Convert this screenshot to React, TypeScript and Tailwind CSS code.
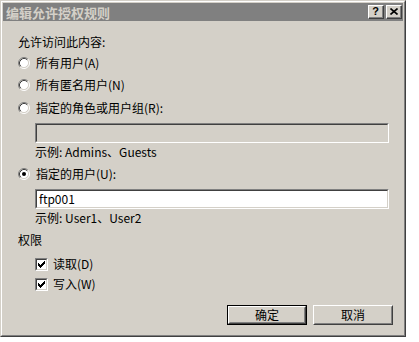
import React from "react";

const font = { fontFamily: '"Noto Sans CJK SC", "Noto Sans", sans-serif' };

function Radio({ checked }: { checked?: boolean }) {
  return (
    <svg width="12" height="12" viewBox="0 0 12 12" className="shrink-0">
      <circle cx="6" cy="6" r="4.5" fill="#ffffff" />
      <path d="M2.11 9.89 A5.5 5.5 0 0 1 9.89 2.11" fill="none" stroke="#808080" strokeWidth="1" />
      <path d="M9.89 2.11 A5.5 5.5 0 0 1 2.11 9.89" fill="none" stroke="#ffffff" strokeWidth="1" />
      <path d="M2.82 9.18 A4.5 4.5 0 0 1 9.18 2.82" fill="none" stroke="#404040" strokeWidth="1" />
      <path d="M9.18 2.82 A4.5 4.5 0 0 1 2.82 9.18" fill="none" stroke="#d4d0c8" strokeWidth="1" />
      {checked && <circle cx="6" cy="6" r="2" fill="#000000" />}
    </svg>
  );
}

function Check() {
  // classic 7x7 check mark, each column 3px tall
  const cols = [2, 3, 4, 3, 2, 1, 0];
  return (
    <div className="w-[13px] h-[13px] shrink-0 border border-t-[#808080] border-l-[#808080] border-r-white border-b-white">
      <div className="w-full h-full bg-white border border-t-[#404040] border-l-[#404040] border-r-[#d4d0c8] border-b-[#d4d0c8]">
        <svg width="9" height="9" viewBox="0 0 9 9">
          {cols.map((y, i) => (
            <rect key={i} x={1 + i} y={1 + y} width="1" height="3" fill="#000" />
          ))}
        </svg>
      </div>
    </div>
  );
}

function TextBox({ value, disabled }: { value?: string; disabled?: boolean }) {
  return (
    <div className="ml-[17px] w-[354px] h-[20px] border border-t-[#808080] border-l-[#808080] border-r-white border-b-white">
      <div
        className={`w-full h-full border border-t-[#404040] border-l-[#404040] border-r-[#d4d0c8] border-b-[#d4d0c8] flex items-center pl-[2px] text-[12px] text-black ${
          disabled ? "bg-[#d4d0c8]" : "bg-white"
        }`}
      >
        {value}
      </div>
    </div>
  );
}

function Btn({ label, isDefault }: { label: string; isDefault?: boolean }) {
  return (
    <div className={`w-[80px] h-[20px] ${isDefault ? "border border-black" : ""}`}>
      <div className="w-full h-full border border-t-white border-l-white border-r-[#404040] border-b-[#404040]">
        <div className="w-full h-full border border-t-[#d4d0c8] border-l-[#d4d0c8] border-r-[#808080] border-b-[#808080] flex items-center justify-center text-[12px] text-black leading-none">
          {label}
        </div>
      </div>
    </div>
  );
}

function TitleBtn({ children }: { children: React.ReactNode }) {
  return (
    <div className="w-[16px] h-[14px] bg-[#d4d0c8] border border-t-white border-l-white border-r-[#404040] border-b-[#404040]">
      <div className="w-full h-full border-r border-b border-r-[#808080] border-b-[#808080] flex items-center justify-center">
        {children}
      </div>
    </div>
  );
}

export default function App() {
  return (
    <div className="w-[419px] h-[342px] bg-white" style={font}>
      <div className="w-[406px] h-[337px] border border-t-[#d4d0c8] border-l-[#d4d0c8] border-r-[#404040] border-b-[#404040]">
        <div className="w-full h-full border border-t-white border-l-white border-r-[#808080] border-b-[#808080] bg-[#d4d0c8] p-[1px] flex flex-col">
          {/* 标题栏 */}
          <div className="h-[18px] bg-[#808080] flex items-center pl-[3px] pr-[1px]">
            <span className="text-[13px] font-bold text-[#d4d0c8] leading-none tracking-[0px]">编辑允许授权规则</span>
            <div className="ml-auto flex gap-[2px]">
              <TitleBtn>
                <span className="text-[11px] font-bold leading-none text-black" style={{ fontFamily: '"Liberation Sans", sans-serif' }}>?</span>
              </TitleBtn>
              <TitleBtn>
                <svg width="8" height="7" viewBox="0 0 8 7">
                  <path d="M0.5 0.5 L7.5 6.5 M7.5 0.5 L0.5 6.5" stroke="#000" strokeWidth="1.6" />
                </svg>
              </TitleBtn>
            </div>
          </div>

          {/* 内容 */}
          <div className="flex flex-col pl-[15px] text-[12px] text-black leading-none">
            <div className="mt-[11px] h-[20px] flex items-center">允许访问此内容:</div>
            <div className="mt-[1px] h-[20px] flex items-center gap-[6px] pl-[-1px]">
              <Radio />
              <span>所有用户(A)</span>
            </div>
            <div className="mt-[2px] h-[20px] flex items-center gap-[6px]">
              <Radio />
              <span>所有匿名用户(N)</span>
            </div>
            <div className="mt-[3px] h-[20px] flex items-center gap-[6px]">
              <Radio />
              <span>指定的角色或用户组(R):</span>
            </div>
            <div className="mt-[5px]">
              <TextBox disabled />
            </div>
            <div className="h-[18px] flex items-center pl-[17px]">示例: Admins、Guests</div>
            <div className="mt-[3px] h-[20px] flex items-center gap-[6px]">
              <Radio checked />
              <span>指定的用户(U):</span>
            </div>
            <div className="mt-[5px]">
              <TextBox value="ftp001" />
            </div>
            <div className="h-[18px] flex items-center pl-[17px]">示例: User1、User2</div>
            <div className="mt-[3px] h-[20px] flex items-center">权限</div>
            <div className="mt-[4px] h-[20px] flex items-center gap-[5px] pl-[17px]">
              <Check />
              <span>读取(D)</span>
            </div>
            <div className="h-[20px] flex items-center gap-[5px] pl-[17px]">
              <Check />
              <span>写入(W)</span>
            </div>
            <div className="mt-[11px] flex gap-[6px] pl-[209px]">
              <Btn label="确定" isDefault />
              <Btn label="取消" />
            </div>
          </div>
        </div>
      </div>
    </div>
  );
}
